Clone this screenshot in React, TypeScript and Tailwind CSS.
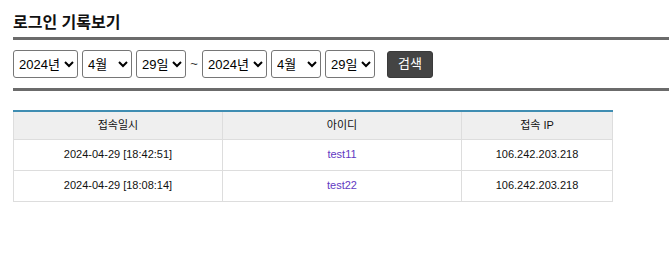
import React from "react";

const font = { fontFamily: '"Liberation Sans", "Noto Sans CJK KR", Arial, sans-serif' };

function Sel({ w, value, options }: { w: string; value: string; options: string[] }) {
  return (
    <select
      defaultValue={value}
      className={`${w} h-[28px] border border-[#767676] rounded-[3px] bg-white pl-[1px] text-[13px] text-black`}
    >
      {options.map((o) => (
        <option key={o} value={o}>
          {o}
        </option>
      ))}
    </select>
  );
}

export default function App() {
  const years = ["2023년", "2024년"];
  const months = Array.from({ length: 12 }, (_, i) => `${i + 1}월`);
  const days = Array.from({ length: 31 }, (_, i) => `${i + 1}일`);
  const rows = [
    { d: "2024-04-29 [18:42:51]", id: "test11", ip: "106.242.203.218" },
    { d: "2024-04-29 [18:08:14]", id: "test22", ip: "106.242.203.218" },
  ];
  return (
    <div className="w-[669px] h-[255px] bg-white pl-[13px] pt-[15px]" style={font}>
      <h2 className="text-[16px] leading-[16px] font-bold text-[#111]">로그인 기록보기</h2>
      <div className="mt-[6px] h-[3px] bg-[#6b6b6b]" />
      <div className="mt-[10px] flex items-center h-[28px]">
        <Sel w="w-[65px]" value="2024년" options={years} />
        <div className="w-[4px]" />
        <Sel w="w-[50px]" value="4월" options={months} />
        <div className="w-[4px]" />
        <Sel w="w-[50px]" value="29일" options={days} />
        <span className="w-[16px] text-center text-[13px] text-[#333]">~</span>
        <Sel w="w-[65px]" value="2024년" options={years} />
        <div className="w-[4px]" />
        <Sel w="w-[50px]" value="4월" options={months} />
        <div className="w-[4px]" />
        <Sel w="w-[50px]" value="29일" options={days} />
        <button className="ml-[12px] w-[46px] h-[27px] rounded-[3px] bg-[#444444] border border-[#3a3a3a] text-white text-[13px]">
          검색
        </button>
      </div>
      <div className="mt-[10px] h-[3px] bg-[#6b6b6b]" />
      <table className="mt-[19px] w-[599px] border-collapse text-[11px] text-[#111] table-fixed">
        <colgroup>
          <col className="w-[209px]" />
          <col className="w-[239px]" />
          <col className="w-[151px]" />
        </colgroup>
        <thead>
          <tr className="bg-[#efefef] h-[28px]">
            <th className="font-normal border border-[#dddddd] border-t-[#3f8db2] border-t-2">접속일시</th>
            <th className="font-normal border border-[#dddddd] border-t-[#3f8db2] border-t-2">아이디</th>
            <th className="font-normal border border-[#dddddd] border-t-[#3f8db2] border-t-2">접속 IP</th>
          </tr>
        </thead>
        <tbody>
          {rows.map((r) => (
            <tr key={r.id} className="h-[31px]">
              <td className="text-center border border-[#dddddd]">{r.d}</td>
              <td className="text-center border border-[#dddddd] text-[#6139c2]">{r.id}</td>
              <td className="text-center border border-[#dddddd]">{r.ip}</td>
            </tr>
          ))}
        </tbody>
      </table>
    </div>
  );
}
